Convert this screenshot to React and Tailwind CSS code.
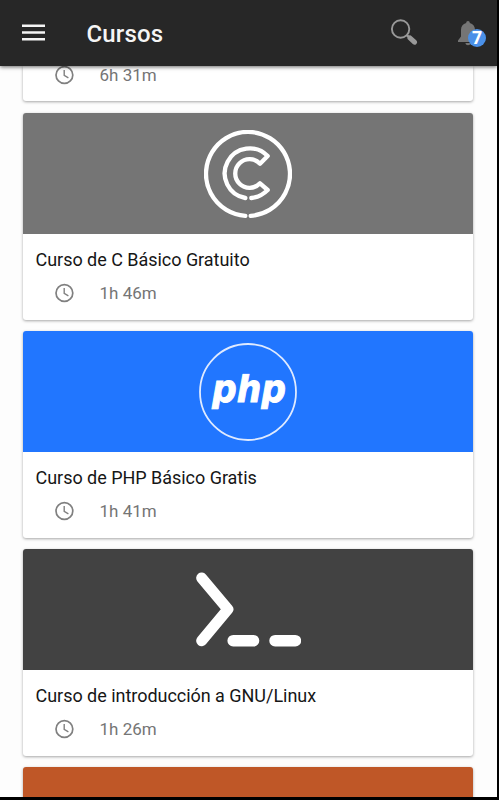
import React from 'react';

const CLogo = () => (
  <svg viewBox="42 42 264 264" className="w-[88px] h-[88px]" fill="none" stroke="#fff" strokeWidth="13" strokeLinecap="round" strokeLinejoin="round">
    <path d="M166 299.5A126 126 0 1 1 182 299.5" />
    <path d="M166 246A75 75 0 1 1 233 120L210 143A43 43 0 1 0 210 202L233 222Q212 243 184 246" />
  </svg>
);

const PhpLogo = () => (
  <svg viewBox="0 0 98 98" className="w-[98px] h-[98px]">
    <clipPath id="phpTrim">
      <rect x="0" y="30.8" width="98" height="35.5" />
    </clipPath>
    <circle cx="49" cy="49" r="48" fill="none" stroke="#dfeaff" strokeWidth="1.8" />
    <text
      x="13"
      y="58.5"
      clipPath="url(#phpTrim)"
      textLength="74"
      lengthAdjust="spacingAndGlyphs"
      stroke="#fff"
      strokeWidth="1"
      className="fill-white text-[38px] font-bold italic font-['DejaVu_Sans',sans-serif]"
    >
      php
    </text>
  </svg>
);

const TerminalLogo = () => (
  <svg viewBox="47 53 316 224" className="w-[105px] h-[75px]" fill="none" stroke="#fff" strokeLinecap="round" strokeLinejoin="round">
    <path d="M64 70L143 164L64 259" strokeWidth="33" />
    <path d="M159 259H220M285 259H346" strokeWidth="35" />
  </svg>
);

const ClockIcon = () => (
  <svg viewBox="0 0 20 20" className="w-5 h-5" fill="none" stroke="#808080" strokeWidth="1.7">
    <circle cx="10.4" cy="10" r="8.4" />
    <path d="M10.2 5V10.4L14.4 12.8" strokeWidth="1.4" />
  </svg>
);

const SearchIcon = () => (
  <svg viewBox="0 0 28 28" className="w-7 h-7" fill="none" stroke="#999">
    <circle cx="10.6" cy="10" r="8.7" strokeWidth="1.9" />
    <path d="M16.8 16.1L19.8 18.9" strokeWidth="2.5" />
    <path d="M20 19L24.5 23.2" strokeWidth="5" strokeLinecap="round" />
  </svg>
);

const BellIcon = () => (
  <svg viewBox="0 0 20 25" className="w-5 h-[25px]" fill="#757575">
    <path d="M10 0C11.1 0 11.8 .8 11.8 2C15.2 2.9 17 5.6 17 9V15.6L20 19.5V21H0V19.5L3 15.6V9C3 5.6 4.8 2.9 8.2 2C8.2 .8 8.9 0 10 0Z" />
    <path d="M7.5 22H12.5C12.5 25 7.5 25 7.5 22Z" />
  </svg>
);

const courses = [
  { title: 'Curso de C Básico Gratuito', time: '1h 46m', color: 'bg-[#757575]', logo: <CLogo /> },
  { title: 'Curso de PHP Básico Gratis', time: '1h 41m', color: 'bg-[#2176ff]', logo: <PhpLogo /> },
  { title: 'Curso de introducción a GNU/Linux', time: '1h 26m', color: 'bg-[#424242]', logo: <TerminalLogo /> },
];

const Duration = ({ time }) => (
  <div className="flex items-center gap-[25.5px] pl-[31px] h-5">
    <ClockIcon />
    <span className="text-[17px] leading-5 text-[#757575]">{time}</span>
  </div>
);

const CourseCard = ({ course }) => (
  <article className="h-[207px] shrink-0 rounded-[3px] overflow-hidden bg-white shadow-[0_1px_3px_rgba(0,0,0,0.35)]">
    <div className={`h-[121px] flex items-center justify-center ${course.color}`}>{course.logo}</div>
    <h2 className="mt-[14px] pl-[12.5px] text-[18px] leading-6 tracking-[-0.03px] text-[#161616] whitespace-nowrap">{course.title}</h2>
    <div className="mt-[11px]">
      <Duration time={course.time} />
    </div>
  </article>
);

const App = () => {
  return (
    <div className="w-[499px] h-[800px] bg-black pr-[2px] pb-[3px] font-[Roboto,sans-serif]">
      <div className="h-full flex flex-col overflow-hidden bg-[#fdfdfd]">
        {/* Top bar */}
        <header className="relative z-10 h-[66px] shrink-0 flex items-center bg-[#272727] pl-[22px] pr-[11px] shadow-[0_1px_4px_rgba(0,0,0,0.6)]">
          <button className="w-[23px] -mt-[2px]" aria-label="Menú">
            <svg viewBox="0 0 23 17" className="w-[23px] h-[17px]" fill="#f5f5f5">
              <path d="M0 .5H23V3H0ZM0 7.25H23V9.75H0ZM0 14H23V16.5H0Z" />
            </svg>
          </button>
          <h1 className="ml-[41.5px] mt-px text-[24px] leading-7 font-medium tracking-[0.15px] text-[#f5f5f5]">Cursos</h1>
          <div className="ml-auto flex items-center gap-10">
            <SearchIcon />
            <div className="relative w-7">
              <BellIcon />
              <span className="absolute left-[10px] top-[8px] w-[18px] h-[18px] rounded-full bg-[#4a90e8] flex items-center justify-center text-white text-[17.5px] leading-none font-bold font-['Open_Sans',sans-serif]">
                7
              </span>
            </div>
          </div>
        </header>

        {/* Course list */}
        <main className="flex-1 min-h-0 flex flex-col overflow-hidden pl-[23px] pr-6">
          <article className="h-[35px] shrink-0 rounded-b-[3px] bg-white shadow-[0_1px_3px_rgba(0,0,0,0.35)]">
            <div className="-translate-y-px">
              <Duration time="6h 31m" />
            </div>
          </article>
          <div className="mt-3 flex flex-col gap-[11px]">
            {courses.map((course) => (
              <CourseCard key={course.title} course={course} />
            ))}
            <div className="h-[121px] shrink-0 rounded-t-[3px] bg-[#bf5727] shadow-[0_1px_3px_rgba(0,0,0,0.35)]" />
          </div>
        </main>
      </div>
    </div>
  );
};

export default App;
